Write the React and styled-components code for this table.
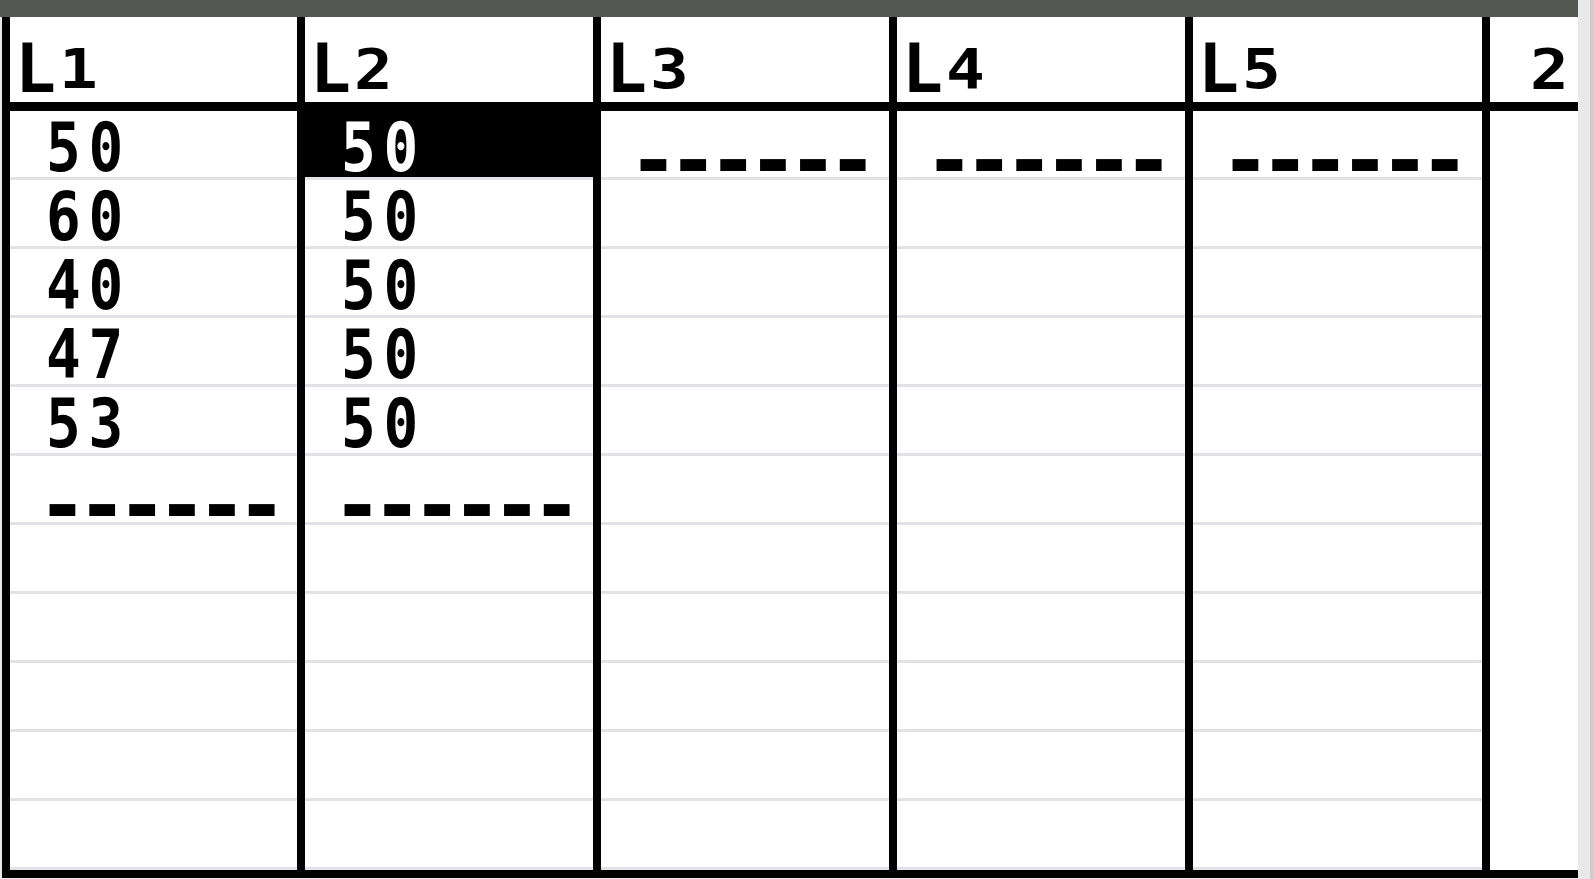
import React from "react";
import styled, { createGlobalStyle } from "styled-components";

const GlobalStyle = createGlobalStyle`
  html, body {
    margin: 0;
    padding: 0;
    background: #e9e9e9;
  }
  body {
    font-family: "DejaVu Sans Mono", "Liberation Mono", monospace;
  }
`;

const ROWS = 11;

const lists = [
    { sub: "1", width: 295, values: ["50", "60", "40", "47", "53"] },
    { sub: "2", width: 296, values: ["50", "50", "50", "50", "50"], selected: 0 },
    { sub: "3", width: 296, values: [] },
    { sub: "4", width: 296, values: [] },
    { sub: "5", width: 297, values: [] },
];

const Screen = styled.div`
    width: 1593px;
    height: 879px;
    box-sizing: border-box;
    border-right: 3px solid #cdcdcd;
    display: flex;
    flex-direction: column;
    overflow: hidden;
`;

const TopBar = styled.div`
    width: 1578px;
    height: 17px;
    flex: none;
    background: #555753;
`;

const Table = styled.div`
    margin-left: 2px;
    width: 1576px;
    box-sizing: border-box;
    display: flex;
    background: #fff;
    border-left: 8px solid #000;
    border-bottom: 8px solid #000;
`;

const Column = styled.div`
    width: ${p => p.$width}px;
    flex: none;
    box-sizing: border-box;
    display: flex;
    flex-direction: column;
    border-right: ${p => (p.$last ? "none" : "8px solid #000")};
`;

const Header = styled.div`
    height: 94px;
    box-sizing: border-box;
    border-bottom: 9px solid #000;
    padding: 18px 9px 0 5px;
    display: flex;
    justify-content: ${p => (p.$right ? "flex-end" : "flex-start")};
    align-items: flex-start;
    font-weight: bold;
    font-size: 68px;
    line-height: 68px;
    color: #000;
`;

const Sub = styled.span`
    font-size: 56px;
    display: inline-block;
    transform: scaleX(1.15);
    transform-origin: left bottom;
    margin-left: 3px;
`;

const Indicator = styled.span`
    font-size: 56px;
    display: inline-block;
    transform: scaleX(1.15);
    transform-origin: right bottom;
`;

const Cell = styled.div`
    height: 69px;
    box-sizing: border-box;
    padding: 3px 0 0 36px;
    border-bottom: 3px solid ${p => (p.$plain ? "transparent" : "#e5e2e7")};
    background: ${p => (p.$selected ? "#000" : "#fff")};
    color: ${p => (p.$selected ? "#fff" : "#000")};
    font-weight: bold;
    font-size: 68px;
    line-height: 68px;
    white-space: pre;
`;

const Value = styled.span`
    display: inline-block;
    letter-spacing: 9px;
    transform: scaleX(0.85);
    transform-origin: left bottom;
`;

const Dashes = styled.span`
    display: inline-block;
    margin-left: -1px;
    font-family: "DejaVu Sans", "Liberation Sans", sans-serif;
    font-size: 84px;
    letter-spacing: 5px;
    transform: translateY(12px);
`;

function ListColumn({ list }) {
    const cells = [];
    for (let i = 0; i < ROWS; i++) {
        let content = null;
        if (i < list.values.length) content = <Value>{list.values[i]}</Value>;
        else if (i === list.values.length) content = <Dashes>------</Dashes>;
        cells.push(
            <Cell key={i} $selected={list.selected === i}>
                {content}
            </Cell>
        );
    }
    return (
        <Column $width={list.width}>
            <Header>
                L<Sub>{list.sub}</Sub>
            </Header>
            {cells}
        </Column>
    );
}

export default function App() {
    return (
        <>
            <GlobalStyle />
            <Screen>
                <TopBar />
                <Table>
                    {lists.map(list => (
                        <ListColumn key={list.sub} list={list} />
                    ))}
                    <Column $width={88} $last>
                        <Header $right>
                            <Indicator>2</Indicator>
                        </Header>
                        {Array.from({ length: ROWS }, (_, i) => (
                            <Cell key={i} $plain />
                        ))}
                    </Column>
                </Table>
            </Screen>
        </>
    );
}
